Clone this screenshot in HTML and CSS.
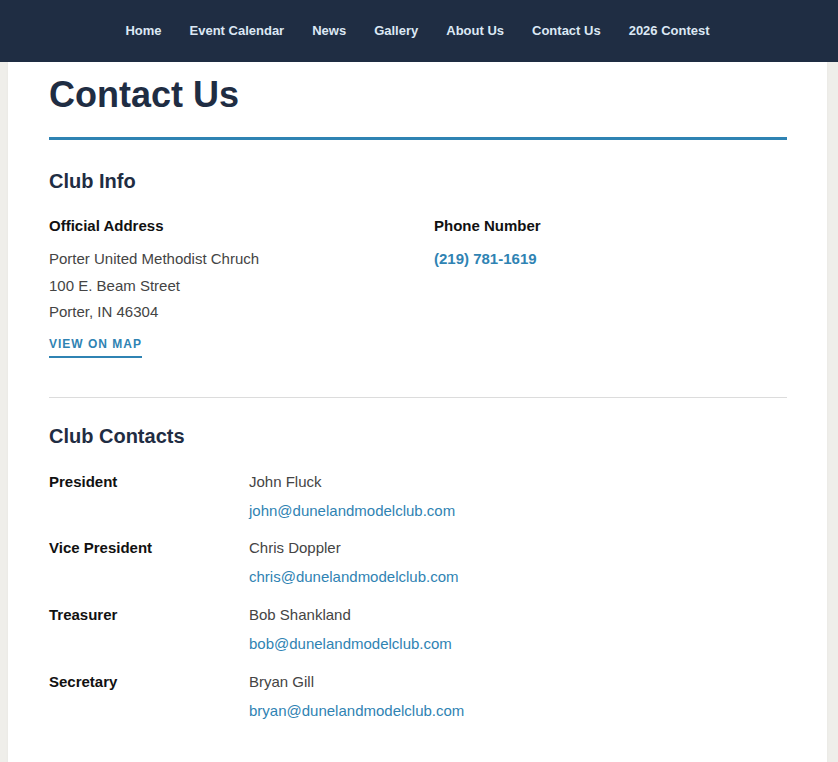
FILE: index.html
```html
<!DOCTYPE html>
<html lang="en">
<head>
    <meta charset="UTF-8">
    <meta name="viewport" content="width=device-width, initial-scale=1.0">
    <title>Contact Us</title>
    <link rel="stylesheet" href="styles.css">
</head>
<body>
    <nav class="site-nav">
        <a href="#">Home</a>
        <a href="#">Event Calendar</a>
        <a href="#">News</a>
        <a href="#">Gallery</a>
        <a href="#">About Us</a>
        <a href="#">Contact Us</a>
        <a href="#">2026 Contest</a>
    </nav>

    <main class="page">
        <h1 class="page-title">Contact Us</h1>

        <section class="club-info">
            <h2>Club Info</h2>
            <div class="info-grid">
                <div>
                    <h3>Official Address</h3>
                    <p class="address">
                        Porter United Methodist Chruch<br>
                        100 E. Beam Street<br>
                        Porter, IN 46304
                    </p>
                    <a class="map-link" href="#">View on map</a>
                </div>
                <div>
                    <h3>Phone Number</h3>
                    <a class="phone" href="#">(219) 781-1619</a>
                </div>
            </div>
        </section>

        <section class="club-contacts">
            <h2>Club Contacts</h2>
            <div class="contact-row">
                <div class="role">President</div>
                <div class="person">
                    <div>John Fluck</div>
                    <a href="#">john@dunelandmodelclub.com</a>
                </div>
            </div>
            <div class="contact-row">
                <div class="role">Vice President</div>
                <div class="person">
                    <div>Chris Doppler</div>
                    <a href="#">chris@dunelandmodelclub.com</a>
                </div>
            </div>
            <div class="contact-row">
                <div class="role">Treasurer</div>
                <div class="person">
                    <div>Bob Shankland</div>
                    <a href="#">bob@dunelandmodelclub.com</a>
                </div>
            </div>
            <div class="contact-row">
                <div class="role">Secretary</div>
                <div class="person">
                    <div>Bryan Gill</div>
                    <a href="#">bryan@dunelandmodelclub.com</a>
                </div>
            </div>
        </section>
    </main>
</body>
</html>
```

FILE: styles.css
```css
* {
    box-sizing: border-box;
    margin: 0;
    padding: 0;
}

body {
    font-family: 'Liberation Sans', Arial, sans-serif;
    font-size: 15px;
    color: #444;
    background: #efeeea;
    min-height: 100vh;
}

a {
    color: #2f83b3;
    text-decoration: none;
}

.site-nav {
    height: 62px;
    background: #1f2d43;
    display: flex;
    justify-content: center;
    align-items: center;
    padding: 0 3px 2px 0;
}

.site-nav a {
    color: #dce8f4;
    font-size: 13px;
    font-weight: 700;
    padding: 0 14px;
}

.page {
    margin: 0 11px 0 8px;
    background: #fff;
    padding: 11px 40px 40px 41px;
    min-height: 700px;
    box-shadow: 0 0 3px rgba(0, 0, 0, 0.04);
}

.page-title {
    font-size: 36px;
    line-height: 44px;
    color: #1f2d43;
    padding-bottom: 20px;
    border-bottom: 3px solid #2f83b3;
}

h2 {
    font-size: 20px;
    line-height: 24px;
    color: #1f2d43;
}

.club-info {
    padding-top: 29px;
    padding-bottom: 39px;
    border-bottom: 1px solid #dcdcdc;
}

.info-grid {
    display: grid;
    grid-template-columns: 1fr 1fr;
    column-gap: 32px;
    margin-top: 23px;
}

h3 {
    font-size: 15px;
    line-height: 20px;
    color: #111;
    margin-bottom: 10px;
}

.address {
    line-height: 26.5px;
}

.phone {
    display: inline-block;
    font-weight: 700;
    line-height: 26.5px;
}

.map-link {
    display: inline-block;
    margin-top: 10px;
    font-size: 12px;
    font-weight: 700;
    text-transform: uppercase;
    letter-spacing: 1px;
    line-height: 16px;
    padding-bottom: 4px;
    border-bottom: 2px solid #2f83b3;
}

.club-contacts {
    padding-top: 26px;
}

.club-contacts h2 {
    margin-bottom: 19px;
}

.contact-row {
    display: grid;
    grid-template-columns: 200px 1fr;
    line-height: 29px;
    margin-bottom: 8.7px;
}

.role {
    font-weight: 700;
    color: #111;
}
```
